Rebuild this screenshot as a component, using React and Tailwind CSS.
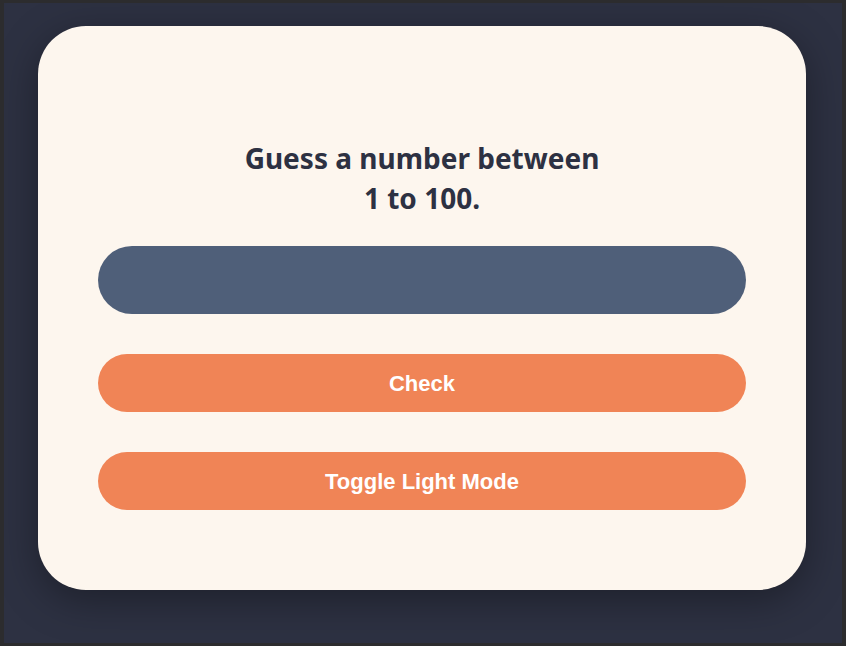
import React from 'react';

const App = () => {
  return (
    <div className="w-[846px] h-[646px] border-x-4 border-y-[3px] border-[#2c2c2e] bg-[#2d3142] overflow-hidden">
      <div className="pl-[34px] pt-[23px]">
        <div className="w-[768px] h-[564px] bg-[#fdf6ee] rounded-[48px] shadow-[0_10px_40px_rgba(0,0,0,0.35)] px-[60px] pt-[112px] flex flex-col">
          <h1 className="text-center text-[28px] leading-[40px] font-bold text-[#2d3142] font-['Noto_Sans',sans-serif]">
            Guess a number between
            <br />
            1 to 100.
          </h1>
          <input
            type="text"
            className="mt-[28px] h-[68px] w-full rounded-full bg-[#4f5f79] outline-none px-6 text-white text-xl"
          />
          <button className="mt-[40px] h-[58px] w-full rounded-full bg-[#f08456] text-white text-[22px] font-bold font-['Liberation_Sans',Arial,sans-serif]">
            Check
          </button>
          <button className="mt-[40px] h-[58px] w-full rounded-full bg-[#f08456] text-white text-[22px] font-bold font-['Liberation_Sans',Arial,sans-serif]">
            Toggle Light Mode
          </button>
        </div>
      </div>
    </div>
  );
};

export default App;
